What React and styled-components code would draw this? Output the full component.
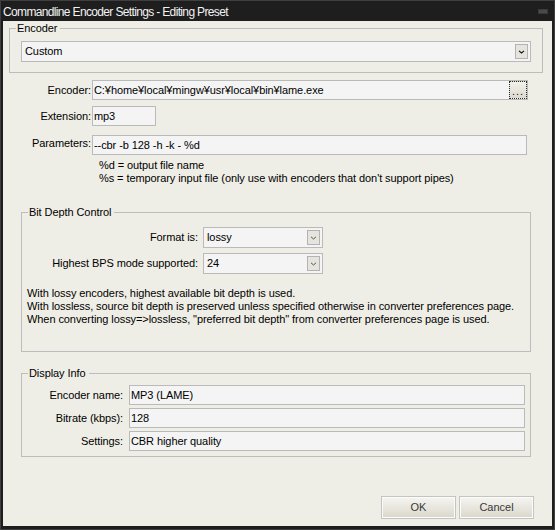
import React from "react";
import styled, { createGlobalStyle } from "styled-components";

const GlobalStyle = createGlobalStyle`
  html, body {
    margin: 0;
    padding: 0;
    background: #1e1e1e;
  }
`;

const Window = styled.div`
  box-sizing: border-box;
  width: 555px;
  height: 530px;
  display: flex;
  flex-direction: column;
  padding: 0 2px 3px;
  background: #1e1e1e;
  border: 1px solid #3f3f3f;
  font: 11px/13px "Liberation Sans", Arial, sans-serif;
  letter-spacing: -0.08px;
  color: #000;
`;

const TitleBar = styled.div`
  height: 20px;
  display: flex;
  align-items: center;
  justify-content: space-between;
  color: #f2f2f2;
  font-size: 12px;
  line-height: 14px;
  letter-spacing: -0.65px;
`;

const TitleText = styled.span`
  padding-top: 2px;
  white-space: nowrap;
`;

const TitleGrip = styled.span`
  width: 8px;
  height: 3px;
  margin-right: 4px;
  background: #4a4a4a;
  border: 1px solid #3a3a3a;
`;

const Body = styled.div`
  flex: 1;
  display: flex;
  flex-direction: column;
  padding: 1px 9px 7px 6px;
  background: #efeee6;
`;

const Group = styled.fieldset`
  margin: ${(p) => p.$mt || 0}px 0 0;
  padding: 0;
  min-width: 0;
  border: 1px solid #bdbdbd;
`;

const Legend = styled.legend`
  margin-left: 6px;
  padding: 0 3px 0 1px;
  line-height: 13px;
`;

const GroupInner = styled.div`
  padding: ${(p) => p.$pad};
`;

const Section = styled.div`
  margin: ${(p) => p.$mt || 0}px 12px 0;
`;

const Row = styled.div`
  display: flex;
  align-items: ${(p) => (p.$top ? "flex-start" : "center")};
  margin-top: ${(p) => p.$mt || 0}px;
`;

const Label = styled.label`
  flex: none;
  box-sizing: border-box;
  width: ${(p) => p.$w}px;
  margin-right: ${(p) => p.$gap}px;
  padding-top: ${(p) => p.$pt || 0}px;
  text-align: right;
  white-space: nowrap;
`;

const Field = styled.div`
  box-sizing: border-box;
  display: flex;
  align-items: center;
  height: 20px;
  ${(p) => (p.$w ? `width: ${p.$w}px;` : "flex: 1;")}
  margin-right: ${(p) => p.$mr || 0}px;
  padding-left: 1px;
  background: #f4f4f4;
  border: 1px solid #bababa;
  white-space: nowrap;
  overflow: hidden;
`;

const FieldText = styled.span`
  flex: 1;
`;

const BrowseButton = styled.span`
  box-sizing: border-box;
  width: 18px;
  height: 18px;
  display: flex;
  align-items: flex-end;
  justify-content: center;
  padding-bottom: 3px;
  border: 1px dotted #2a2a2a;
  background: linear-gradient(#f2f1ea, #dcdad0);
  font-size: 11px;
  line-height: 8px;
  letter-spacing: 1px;
  color: #111;
`;

const Select = styled.div`
  box-sizing: border-box;
  display: flex;
  align-items: center;
  height: 21px;
  ${(p) => (p.$w ? `width: ${p.$w}px;` : "")}
  padding: 0 2px 0 3px;
  background: #f4f4f4;
  border: 1px solid #bababa;
`;

const SelectText = styled.span`
  flex: 1;
  white-space: nowrap;
`;

const DropButton = styled.span`
  box-sizing: border-box;
  width: 13px;
  height: 15px;
  display: flex;
  align-items: center;
  justify-content: center;
  background: #e6e5dd;
  border: 1px solid #b3b3b3;
`;

const Note = styled.div`
  margin: ${(p) => p.$mt || 0}px 0 0 ${(p) => p.$ml || 0}px;
  white-space: nowrap;
`;

const ButtonRow = styled.div`
  margin: auto 9px 0 0;
  display: flex;
  justify-content: flex-end;
  gap: 3px;
`;

const Button = styled.button`
  box-sizing: border-box;
  width: 75px;
  height: 23px;
  padding: 0;
  font: inherit;
  color: #3a3a3a;
  border: 1px solid #c4c4c4;
  box-shadow: inset 0 0 0 1px #fbfbf8;
  background: linear-gradient(#f6f5f0, #d9d7cc);
`;

const Chevron = ({ light }) => (
  <svg width="7" height="4" viewBox="0 0 7 4">
    <polyline
      points="1,0.8 3.5,3 6,0.8"
      fill="none"
      stroke={light ? "#444" : "#111"}
      strokeWidth={light ? 0.9 : 1.1}
    />
  </svg>
);

const Combo = ({ value, width, light }) => (
  <Select $w={width}>
    <SelectText>{value}</SelectText>
    <DropButton>
      <Chevron light={light} />
    </DropButton>
  </Select>
);

export default function App() {
  return (
    <>
      <GlobalStyle />
      <Window>
        <TitleBar>
          <TitleText>Commandline Encoder Settings - Editing Preset</TitleText>
          <TitleGrip />
        </TitleBar>
        <Body>
          <Group>
            <Legend>Encoder</Legend>
            <GroupInner $pad="6px 11px 10px">
              <Combo value="Custom" />
            </GroupInner>
          </Group>

          <Section $mt={7}>
            <Row>
              <Label $w={70} $gap={1}>Encoder:</Label>
              <Field $mr={3}>
                <FieldText>C:¥home¥local¥mingw¥usr¥local¥bin¥lame.exe</FieldText>
                <BrowseButton>...</BrowseButton>
              </Field>
            </Row>
            <Row $mt={6}>
              <Label $w={70} $gap={1}>Extension:</Label>
              <Field $w={64}>mp3</Field>
            </Row>
            <Row $mt={9} $top>
              <Label $w={70} $gap={1} $pt={2}>Parameters:</Label>
              <Field $mr={4}>--cbr -b 128 -h -k - %d</Field>
            </Row>
            <Note $mt={4} $ml={78}>
              %d = output file name
              <br />
              %s = temporary input file (only use with encoders that don't support pipes)
            </Note>

            <Group $mt={21}>
              <Legend>Bit Depth Control</Legend>
              <GroupInner $pad="8px 0 25px 5px">
                <Row>
                  <Label $w={171} $gap={5}>Format is:</Label>
                  <Combo value="lossy" width={120} light />
                </Row>
                <Row $mt={5}>
                  <Label $w={171} $gap={5}>Highest BPS mode supported:</Label>
                  <Combo value="24" width={120} light />
                </Row>
                <Note $mt={13}>
                  With lossy encoders, highest available bit depth is used.
                  <br />
                  With lossless, source bit depth is preserved unless specified otherwise in converter preferences page.
                  <br />
                  When converting lossy=&gt;lossless, "preferred bit depth" from converter preferences page is used.
                </Note>
              </GroupInner>
            </Group>

            <Group $mt={15}>
              <Legend>Display Info</Legend>
              <GroupInner $pad="5px 5px 5px 0">
                <Row>
                  <Label $w={101} $gap={6}>Encoder name:</Label>
                  <Field>MP3 (LAME)</Field>
                </Row>
                <Row $mt={3}>
                  <Label $w={101} $gap={6}>Bitrate (kbps):</Label>
                  <Field>128</Field>
                </Row>
                <Row $mt={3}>
                  <Label $w={101} $gap={6}>Settings:</Label>
                  <Field>CBR higher quality</Field>
                </Row>
              </GroupInner>
            </Group>
          </Section>

          <ButtonRow>
            <Button>OK</Button>
            <Button>Cancel</Button>
          </ButtonRow>
        </Body>
      </Window>
    </>
  );
}
